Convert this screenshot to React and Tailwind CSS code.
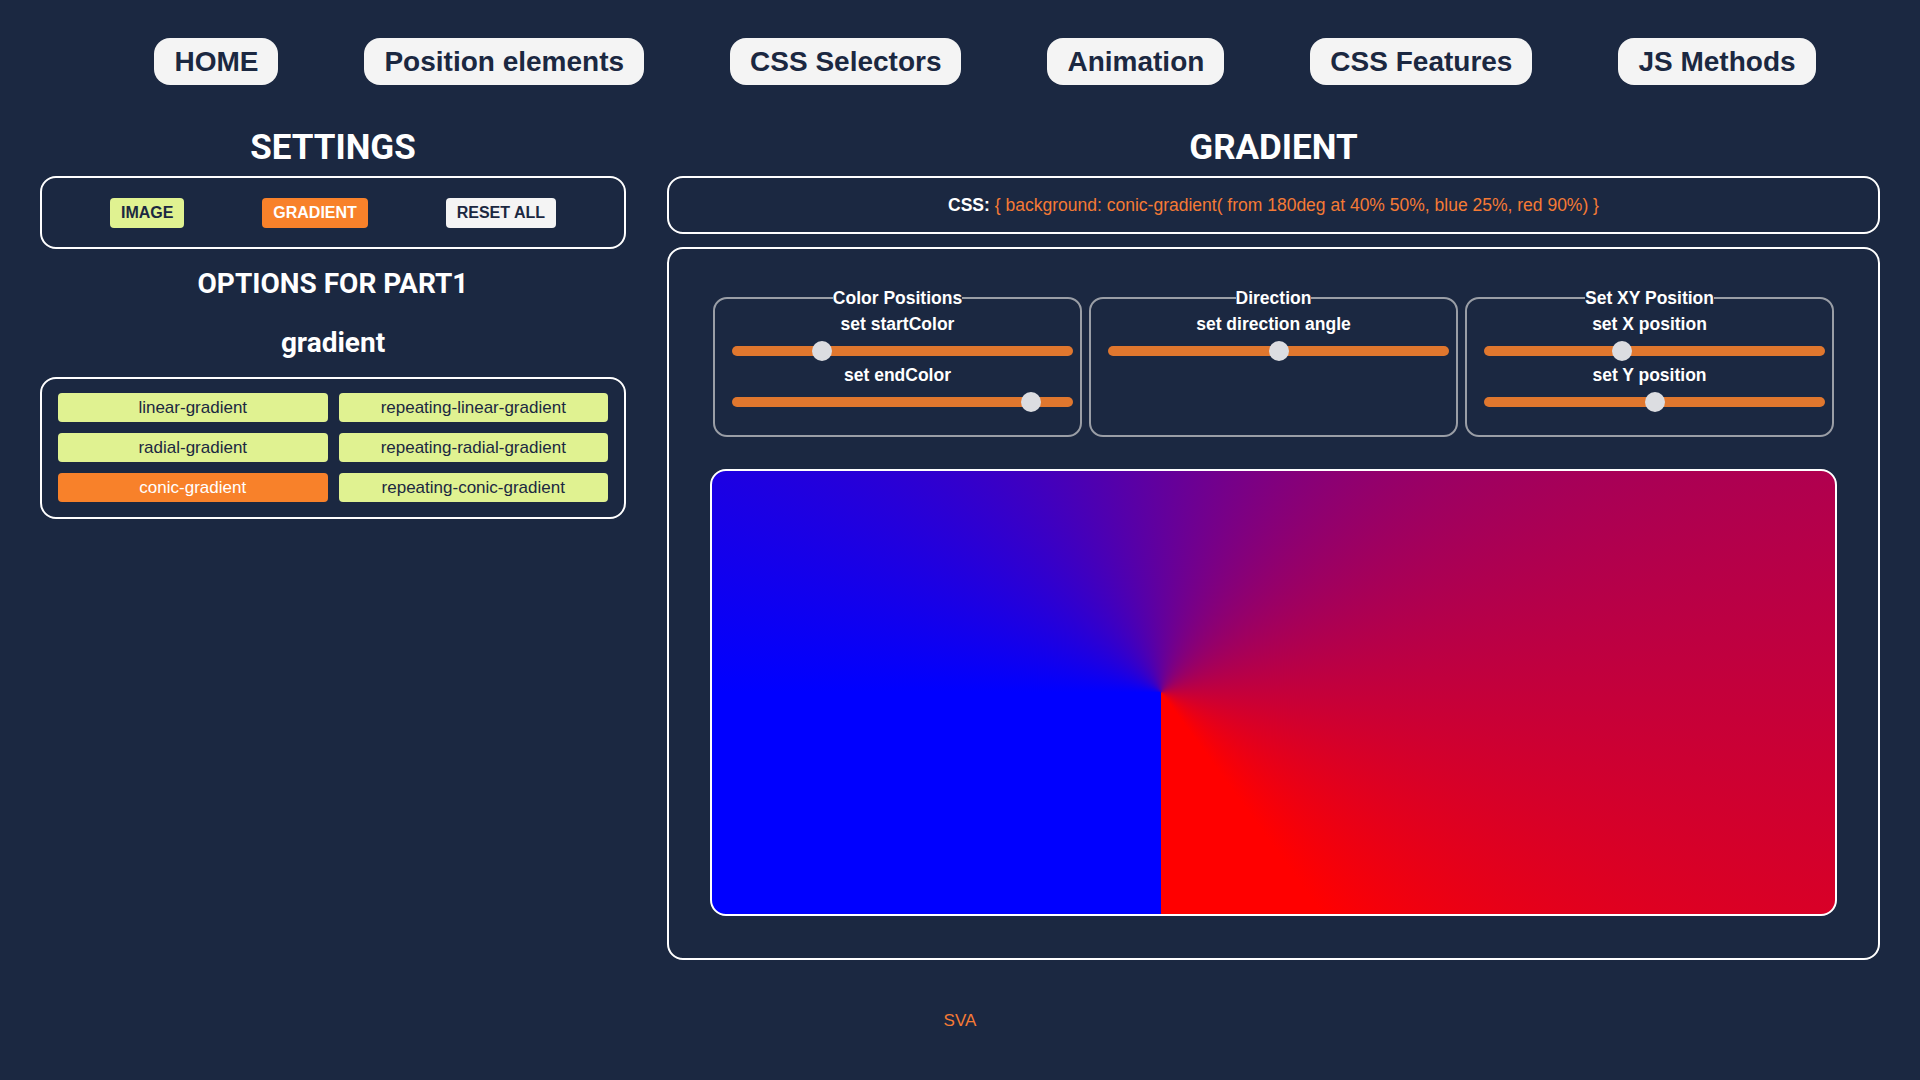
import React from 'react';

const navItems = ['HOME', 'Position elements', 'CSS Selectors', 'Animation', 'CSS Features', 'JS Methods'];

const gradientTypes = [
  ['linear-gradient', 'repeating-linear-gradient'],
  ['radial-gradient', 'repeating-radial-gradient'],
  ['conic-gradient', 'repeating-conic-gradient'],
];

const Slider = ({ label, value, max = 100 }) => (
  <div className="flex flex-col items-center w-full">
    <span className="text-[17.5px] leading-[20px] font-bold text-white">{label}</span>
    <div className="w-full mt-[7px] py-[5px] pl-[17px] pr-[7px]">
      <input
        type="range"
        min="0"
        max={max}
        defaultValue={value}
        className="block w-full h-[10px] appearance-none rounded-full bg-[#e0772e] outline-none cursor-pointer [&::-webkit-slider-thumb]:appearance-none [&::-webkit-slider-thumb]:w-[20px] [&::-webkit-slider-thumb]:h-[20px] [&::-webkit-slider-thumb]:rounded-full [&::-webkit-slider-thumb]:bg-[#dcdde1]"
      />
    </div>
  </div>
);

const Group = ({ title, children }) => (
  <fieldset className="w-[369px] h-[149px] border-2 border-[#9a9ea6] rounded-[14px] px-0 pt-[6px]">
    <legend className="mx-auto px-0 text-[17.5px] leading-[20px] font-bold text-white">{title}</legend>
    <div className="flex flex-col gap-[4px]">{children}</div>
  </fieldset>
);

export default function App() {
  return (
    <div
      className="min-h-[1080px] bg-[#1b2841] text-white"
      style={{ fontFamily: '"Liberation Sans", Arial, sans-serif' }}
    >
      {/* Top navigation */}
      <nav className="flex justify-center gap-[86px] pt-[38px] pl-[50px]">
        {navItems.map((item) => (
          <button
            key={item}
            className="h-[47px] px-[20px] rounded-[16px] bg-[#f4f4f4] text-[#1b2841] text-[28px] font-bold leading-none"
          >
            {item}
          </button>
        ))}
      </nav>

      <div className="grid grid-cols-[586px_1213px] gap-[41px] px-[40px] mt-[42px]">
        {/* Settings column */}
        <div className="flex flex-col items-center">
          <h2 className="font-['Roboto'] text-[35px] leading-[40px] font-bold mt-[1px] mb-[8px]">SETTINGS</h2>
          <div className="w-full h-[73px] border-2 border-white rounded-[16px] flex items-center justify-between px-[68px]">
            <button className="h-[30px] px-[11px] rounded-[4px] bg-[#e0f291] text-[#1b2841] text-[16px] font-bold">IMAGE</button>
            <button className="h-[30px] px-[11px] rounded-[4px] bg-[#f8812a] text-white text-[16px] font-bold">GRADIENT</button>
            <button className="h-[30px] px-[11px] rounded-[4px] bg-[#f4f4f4] text-[#1b2841] text-[16px] font-bold">RESET ALL</button>
          </div>

          <h3 className="font-['Roboto'] text-[28px] leading-[32px] font-bold mt-[19px]">OPTIONS FOR PART1</h3>
          <h3 className="font-['Roboto'] text-[28px] leading-[36px] font-bold mt-[25px]">gradient</h3>

          <div className="w-full mt-[16px] border-2 border-white rounded-[16px] px-[16px] pt-[14px] pb-[15px] grid grid-cols-2 gap-x-[11px] gap-y-[11px]">
            {gradientTypes.flat().map((name) => (
              <button
                key={name}
                className={
                  name === 'conic-gradient'
                    ? 'h-[29px] rounded-[4px] bg-[#f8812a] text-white text-[17px]'
                    : 'h-[29px] rounded-[4px] bg-[#e0f291] text-[#1b2841] text-[17px]'
                }
              >
                {name}
              </button>
            ))}
          </div>
        </div>

        {/* Gradient column */}
        <div className="flex flex-col items-center">
          <h2 className="font-['Roboto'] text-[35px] leading-[40px] font-bold mt-[1px] mb-[8px]">GRADIENT</h2>
          <div className="w-full h-[58px] border-2 border-white rounded-[16px] flex items-center justify-center text-[17.5px]">
            <span className="font-bold text-white">CSS:</span>
            <span className="ml-[5px] text-[#f57a35]">
              {'{ background: conic-gradient( from 180deg at 40% 50%, blue 25%, red 90%) }'}
            </span>
          </div>

          <div className="w-full h-[713px] mt-[13px] border-2 border-white rounded-[16px] pt-[39px]">
            <div className="flex justify-center gap-[7px]">
              <Group title="Color Positions">
                <Slider label="set startColor" value={25} />
                <Slider label="set endColor" value={90} />
              </Group>
              <Group title="Direction">
                <Slider label="set direction angle" value={180} max={360} />
              </Group>
              <Group title="Set XY Position">
                <Slider label="set X position" value={40} />
                <Slider label="set Y position" value={50} />
              </Group>
            </div>

            <div
              className="w-[1127px] h-[447px] mx-auto mt-[32px] border-2 border-white rounded-[16px]"
              style={{ background: 'conic-gradient(from 180deg at 40% 50%, blue 25%, red 90%)' }}
            />
          </div>
        </div>
      </div>

      <footer className="text-center text-[#f57a35] text-[17px] mt-[48px]">SVA</footer>
    </div>
  );
}
